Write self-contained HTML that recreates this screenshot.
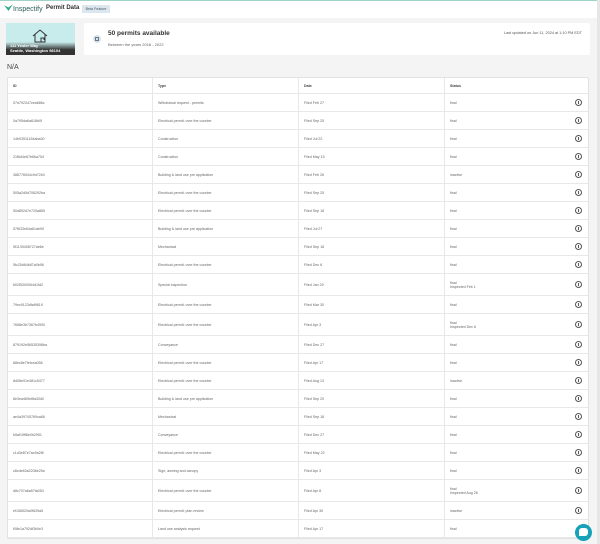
<!DOCTYPE html><html><head><style>
*{margin:0;padding:0;box-sizing:border-box}
body{width:600px;height:544px;overflow:hidden;background:#f4f4f4;font-family:"Liberation Sans",sans-serif;color:#333;position:relative}
.top{position:absolute;left:0;top:0;width:597px;height:18px;background:#fff;border-top:1px solid #9fd3c7}
.sb{position:absolute;right:0;top:0;width:3px;height:544px;background:#e6e6e6}
.tbl{position:absolute;left:7px;top:77px;width:582px;background:#fff;border:1px solid #e2e2e2;border-radius:2px}
.r{display:flex;border-bottom:1px solid #e8e8e8;height:18px;align-items:center;font-size:3.6px;color:#666}
.r.d{height:22px}
.r div{height:100%;display:flex;flex-direction:column;justify-content:center;padding-left:5px;border-right:1px solid #e8e8e8}
.c1{width:145px}.c2{width:146px}.c3{width:146px}.c4{flex:1;border-right:none!important;position:relative}
.i{position:absolute;right:6px;top:50%;margin-top:-3.5px;width:7px;height:7px;border:0.8px solid #555;border-radius:50%}
.i:after{content:"";position:absolute;left:2.2px;top:1.2px;width:1px;height:3px;background:#555}
.h{height:16px;font-weight:bold;color:#444}
</style></head><body>
<div class="top"></div>
<svg style="position:absolute;left:4px;top:4px" width="9" height="8" viewBox="0 0 8 7"><path d="M0 1 L4 6 L8 0 L4 3 Z" fill="#2aa889"/></svg>
<div style="position:absolute;left:13px;top:6px;font-size:7px;color:#2a5d58">Inspectify</div>
<div style="position:absolute;left:46px;top:5px;font-size:6px;font-weight:bold;color:#333;white-space:nowrap">Permit Data</div>
<div style="position:absolute;left:82px;top:5px;width:28px;height:8px;background:#dbe6ee;font-size:3.6px;color:#456;text-align:center;line-height:8px">Beta Feature</div>
<div style="position:absolute;left:6px;top:23px;width:69px;height:32px;background:#c8ecec;overflow:hidden">
<svg style="position:absolute;left:26px;top:6px" width="16" height="14" viewBox="0 0 16 14"><path d="M1 7 L8 1 L15 7 M3 5.5 V13 H13 V5.5 M9 13 V9 H12 V11" fill="none" stroke="#333" stroke-width="1"/></svg>
<div style="position:absolute;left:0;bottom:0;width:100%;height:13px;background:linear-gradient(transparent,#333 60%)"></div>
<div style="position:absolute;left:4px;bottom:2px;font-size:4px;color:#fff;font-weight:bold;line-height:5px">111 Yesler Way<br>Seattle, Washington 98104</div></div>
<div style="position:absolute;left:84px;top:23px;width:506px;height:32px;background:#fff;border-radius:2px">
<div style="position:absolute;left:9px;top:12px;width:8px;height:8px;border-radius:50%;background:#d9e3ea"><div style="margin:2px auto;width:3.5px;height:4px;border:0.6px solid #678"></div></div>
<div style="position:absolute;left:24px;top:7px;font-size:6.5px;font-weight:bold;color:#333">50 permits available</div>
<div style="position:absolute;left:24px;top:19px;font-size:4px;color:#666">Between the years 2018 - 2022</div>
<div style="position:absolute;right:8px;top:8px;font-size:3.8px;color:#555">Last updated on Jun 11, 2024 at 1:10 PM EDT</div></div>
<div style="position:absolute;left:7px;top:64px;font-size:7px;color:#444">N/A</div>
<div class="tbl">
<div class="r h"><div class="c1">ID</div><div class="c2">Type</div><div class="c3">Date</div><div class="c4">Status</div></div>
<div class="r"><div class="c1">07d792347cea686c</div><div class="c2">Withdrawal request - permits</div><div class="c3">Filed Feb 27</div><div class="c4">final<span class="i"></span></div></div>
<div class="r"><div class="c1">0a795da6a618b0f</div><div class="c2">Electrical permit: over the counter</div><div class="c3">Filed Sep 25</div><div class="c4">final<span class="i"></span></div></div>
<div class="r"><div class="c1">14b93511164aba30</div><div class="c2">Construction</div><div class="c3">Filed Jul 22</div><div class="c4">final<span class="i"></span></div></div>
<div class="r"><div class="c1">21f6d4e67b6ba754</div><div class="c2">Construction</div><div class="c3">Filed May 15</div><div class="c4">final<span class="i"></span></div></div>
<div class="r"><div class="c1">386776544c9d72b3</div><div class="c2">Building &amp; land use pre application</div><div class="c3">Filed Feb 26</div><div class="c4">inactive<span class="i"></span></div></div>
<div class="r"><div class="c1">505a2d5d706292ba</div><div class="c2">Electrical permit: over the counter</div><div class="c3">Filed Sep 25</div><div class="c4">final<span class="i"></span></div></div>
<div class="r"><div class="c1">50d892d7e720a865</div><div class="c2">Electrical permit: over the counter</div><div class="c3">Filed Sep 18</div><div class="c4">final<span class="i"></span></div></div>
<div class="r"><div class="c1">57f633e64a61ab90</div><div class="c2">Building &amp; land use pre application</div><div class="c3">Filed Jul 27</div><div class="c4">final<span class="i"></span></div></div>
<div class="r"><div class="c1">5f1139408727ab6e</div><div class="c2">Mechanical</div><div class="c3">Filed Sep 18</div><div class="c4">final<span class="i"></span></div></div>
<div class="r"><div class="c1">5fc25d64b87a0b96</div><div class="c2">Electrical permit: over the counter</div><div class="c3">Filed Dec 6</div><div class="c4">final<span class="i"></span></div></div>
<div class="r d"><div class="c1">602f5300064d1fd2</div><div class="c2">Special inspection</div><div class="c3">Filed Jan 29</div><div class="c4">final<br>Inspected Feb 1<span class="i"></span></div></div>
<div class="r"><div class="c1">79ec9123dfaf9619</div><div class="c2">Electrical permit: over the counter</div><div class="c3">Filed Mar 30</div><div class="c4">final<span class="i"></span></div></div>
<div class="r d"><div class="c1">7658e3b7367b4900</div><div class="c2">Electrical permit: over the counter</div><div class="c3">Filed Apr 3</div><div class="c4">final<br>Inspected Dec 6<span class="i"></span></div></div>
<div class="r"><div class="c1">879192e56535398ba</div><div class="c2">Conveyance</div><div class="c3">Filed Dec 27</div><div class="c4">final<span class="i"></span></div></div>
<div class="r"><div class="c1">88ec8e7fefcea056</div><div class="c2">Electrical permit: over the counter</div><div class="c3">Filed Apr 17</div><div class="c4">final<span class="i"></span></div></div>
<div class="r"><div class="c1">8d08e91e481c5477</div><div class="c2">Electrical permit: over the counter</div><div class="c3">Filed Aug 13</div><div class="c4">inactive<span class="i"></span></div></div>
<div class="r"><div class="c1">8e3ea469e8fa30d0</div><div class="c2">Building &amp; land use pre application</div><div class="c3">Filed Sep 20</div><div class="c4">final<span class="i"></span></div></div>
<div class="r"><div class="c1">ae4a39745769ca68</div><div class="c2">Mechanical</div><div class="c3">Filed Sep 18</div><div class="c4">final<span class="i"></span></div></div>
<div class="r"><div class="c1">b5af19ff8e0b2951</div><div class="c2">Conveyance</div><div class="c3">Filed Dec 27</div><div class="c4">final<span class="i"></span></div></div>
<div class="r"><div class="c1">c1d3e87e7ac9a2f8</div><div class="c2">Electrical permit: over the counter</div><div class="c3">Filed May 22</div><div class="c4">final<span class="i"></span></div></div>
<div class="r"><div class="c1">c8cde63a2208e25a</div><div class="c2">Sign, awning and canopy</div><div class="c3">Filed Apr 3</div><div class="c4">final<span class="i"></span></div></div>
<div class="r d"><div class="c1">d8c707a6a57fa054</div><div class="c2">Electrical permit: over the counter</div><div class="c3">Filed Apr 8</div><div class="c4">final<br>Inspected Aug 26<span class="i"></span></div></div>
<div class="r"><div class="c1">ef156520a0f639a5</div><div class="c2">Electrical permit: plan review</div><div class="c3">Filed Apr 30</div><div class="c4">inactive<span class="i"></span></div></div>
<div class="r"><div class="c1">f08e1a792df3b0e3</div><div class="c2">Land use analysis request</div><div class="c3">Filed Apr 17</div><div class="c4">final</div></div>
</div>
<div style="position:absolute;left:575px;top:524px;width:17px;height:17px;border-radius:50%;background:#17a2b8"><div style="position:absolute;left:4px;top:4px;width:9px;height:8px;background:#fff;border-radius:3px 3px 3px 0"></div></div>
<div class="sb"></div>
</body></html>
